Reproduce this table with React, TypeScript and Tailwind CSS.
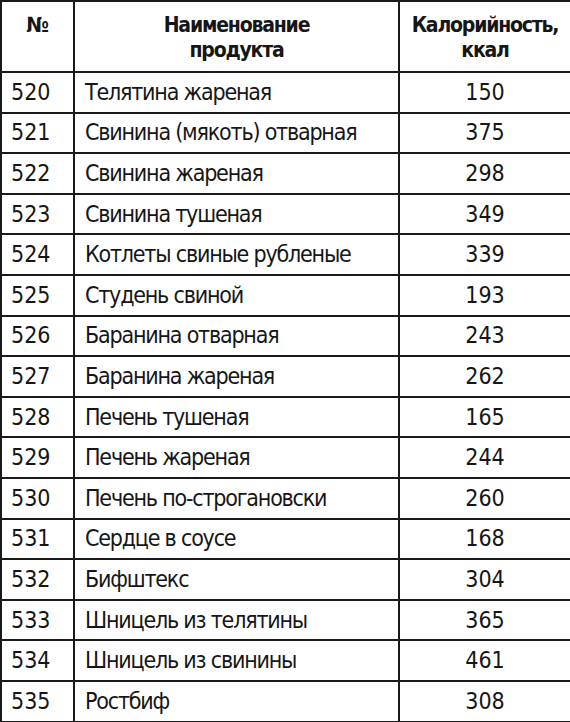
const rows: [string, string, string][] = [
  ["520", "Телятина жареная", "150"],
  ["521", "Свинина (мякоть) отварная", "375"],
  ["522", "Свинина жареная", "298"],
  ["523", "Свинина тушеная", "349"],
  ["524", "Котлеты свиные рубленые", "339"],
  ["525", "Студень свиной", "193"],
  ["526", "Баранина отварная", "243"],
  ["527", "Баранина жареная", "262"],
  ["528", "Печень тушеная", "165"],
  ["529", "Печень жареная", "244"],
  ["530", "Печень по-строгановски", "260"],
  ["531", "Сердце в соусе", "168"],
  ["532", "Бифштекс", "304"],
  ["533", "Шницель из телятины", "365"],
  ["534", "Шницель из свинины", "461"],
  ["535", "Ростбиф", "308"],
];

export default function App() {
  return (
    <div
      className="w-[570px] h-[722px] bg-white text-[#161616]"
      style={{ fontFamily: '"Liberation Sans Narrow", "DejaVu Sans Condensed", "Liberation Sans", sans-serif' }}
    >
      <table className="w-[570px] border-collapse border-2 border-[#1a1a1a] table-fixed">
        <colgroup>
          <col className="w-[73px]" />
          <col className="w-[325px]" />
          <col className="w-[172px]" />
        </colgroup>
        <thead>
          <tr className="h-[71px]">
            <th className="border-2 border-[#1a1a1a] text-[21px] leading-[25px] font-bold text-center align-top pt-[11px]">№</th>
            <th className="border-2 border-[#1a1a1a] text-[21px] leading-[25px] font-bold tracking-[-1.2px] text-center align-middle pt-[3px]">
              Наименование
              <br />
              продукта
            </th>
            <th className="border-2 border-[#1a1a1a] text-[21px] leading-[25px] font-bold tracking-[-1.2px] text-center align-middle pt-[3px]">
              Калорийность,
              <br />
              ккал
            </th>
          </tr>
        </thead>
        <tbody>
          {rows.map(([num, name, kcal]) => (
            <tr key={num} className="h-[40.6px]">
              <td className="border-2 border-[#1a1a1a] pl-[9px] text-[23px] leading-none align-middle">{num}</td>
              <td className="border-2 border-[#1a1a1a] pl-[10px] text-[23px] leading-none tracking-[-1.2px] align-middle whitespace-nowrap">
                {name}
              </td>
              <td className="border-2 border-[#1a1a1a] text-center text-[23px] leading-none align-middle">{kcal}</td>
            </tr>
          ))}
        </tbody>
      </table>
    </div>
  );
}
